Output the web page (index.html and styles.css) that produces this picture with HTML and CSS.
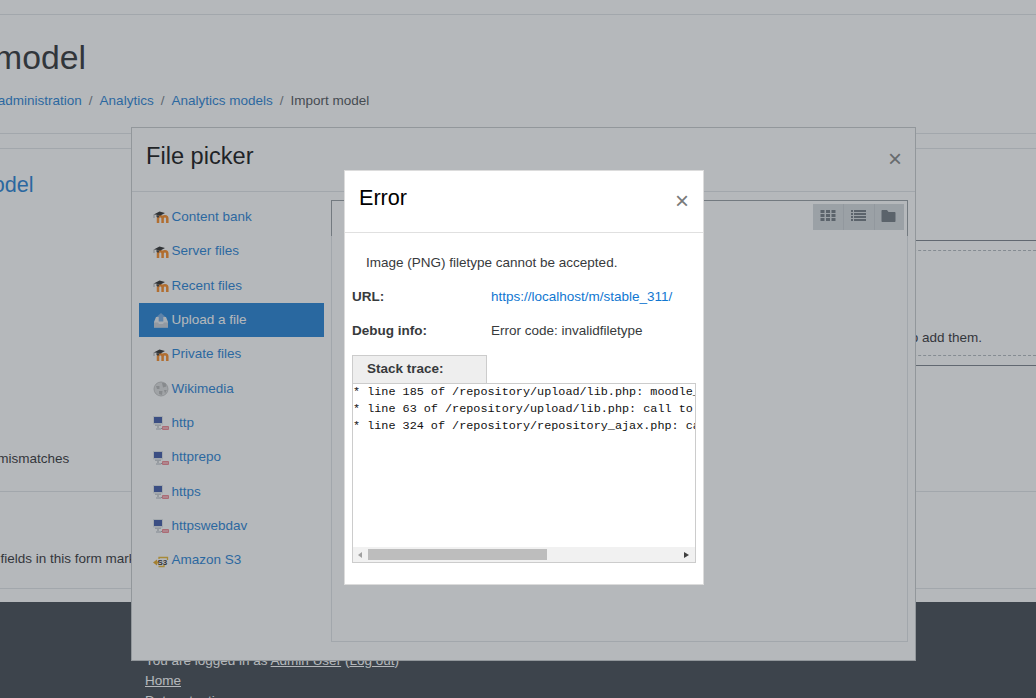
FILE: index.html
```html
<!DOCTYPE html>
<html lang="en">
<head>
<meta charset="utf-8">
<title>Import model</title>
<link rel="stylesheet" href="styles.css">
</head>
<body>
<svg class="defs" width="0" height="0" aria-hidden="true">
  <symbol id="i-moodle" viewBox="0 0 16 16">
    <path d="M5 14V9.500a2.200 2.200 0 0 1 4.600 0V14M9.600 9.500a2.300 2.300 0 0 1 4.700 0V14" fill="none" stroke="#f98012" stroke-width="2.500"/>
    <path d="M.8 5.500 6.500 2.500 12 4 7 6.800 3.800 5.800z" fill="#1c1c1c"/>
    <path d="M3.500 6v2c1 .6 1.800.6 2.500.3V6.500z" fill="#2c2c2c"/>
    <path d="M1 5.500v3.500" stroke="#888" stroke-width=".7" fill="none"/>
  </symbol>
  <symbol id="i-upload" viewBox="0 0 16 16">
    <path d="M1 10 3 5h10l2 5v5.500H1z" fill="#e6eaef"/>
    <path d="M1 10.500h4l1 1.500h4l1-1.500h4v5H1z" fill="#c3cad4"/>
    <path d="M8 1 12.500 5H10.300v4.500H5.700V5H3.500z" fill="#6aa4e0"/>
  </symbol>
  <symbol id="i-wiki" viewBox="0 0 16 16">
    <circle cx="8" cy="8" r="7.200" fill="#dcdcdc"/>
    <path d="M3 5h3.500v3H4zM9 2h3.500l1 3.500L10 6.500zM6 10h3.500L9 14l-3-1zM11 9h2.800L12 12.500z" fill="#b0b0b0"/>
    <circle cx="8" cy="8" r="7" fill="none" stroke="#b8b8b8" stroke-width=".8"/>
  </symbol>
  <symbol id="i-http" viewBox="0 0 16 16">
    <rect x="0" y="1" width="10" height="8.500" fill="#dfe3e8"/>
    <rect x="1" y="2" width="8" height="6" fill="#2f4aa0"/>
    <rect x="2" y="9.500" width="6" height="1.500" fill="#c3c8ce"/>
    <path d="M5 11v2.500h4" stroke="#9aa0a6" stroke-width="1" fill="none"/>
    <rect x="3" y="13" width="5" height="2" fill="#d3d7dc"/>
    <rect x="9" y="11" width="7" height="4" rx="1" fill="#ee7b87"/>
    <rect x="10" y="12.500" width="5" height="1" fill="#fbd6da"/>
  </symbol>
  <symbol id="i-s3" viewBox="0 0 16 16">
    <path d="M0 9.500 4 6.500v6z" fill="#e09d10"/>
    <path d="M3 8.500h3v2H3z" fill="#e6a817"/>
    <path d="M6 6V4.500h8.500V7M5.500 13.500H11V12" fill="none" stroke="#e8b020" stroke-width="1.300"/>
    <text class="s3-text" x="4.500" y="12">S3</text>
  </symbol>
</svg>

<div class="page">
  <div class="topbar"></div>
  <header class="page-head">
    <h1 class="page-title">Import model</h1>
    <nav class="crumbs">
      <a href="#">Home</a><span class="sep">/</span><a href="#">Site administration</a><span class="sep">/</span><a href="#">Analytics</a><span class="sep">/</span><a href="#">Analytics models</a><span class="sep">/</span><span>Import model</span>
    </nav>
  </header>
  <main class="content">
    <h2 class="section-title"><a href="#">Import model</a></h2>
    <div class="form-row">
      <div class="filemanager">
        <div class="dnd">You can drag and drop files here to add them.</div>
      </div>
    </div>
    <div class="check-row">Ignore version mismatches</div>
    <div class="required-row">There are required fields in this form marked with an icon.</div>
  </main>
  <footer class="footer">
    <p class="footer-line">You are logged in as <a href="#">Admin User</a> (<a href="#">Log out</a>)</p>
    <p class="footer-line"><a href="#">Home</a></p>
    <p class="footer-line"><a href="#">Data retention summary</a></p>
  </footer>
</div>

<section class="picker">
  <div class="picker-head">
    <h3 class="picker-title">File picker</h3>
    <span class="close picker-close">×</span>
  </div>
  <div class="picker-body">
    <ul class="repo-list">
      <li class="repo"><svg class="repo-icon"><use href="#i-moodle"/></svg><a href="#">Content bank</a></li>
      <li class="repo"><svg class="repo-icon"><use href="#i-moodle"/></svg><a href="#">Server files</a></li>
      <li class="repo"><svg class="repo-icon"><use href="#i-moodle"/></svg><a href="#">Recent files</a></li>
      <li class="repo active"><svg class="repo-icon"><use href="#i-upload"/></svg><a href="#">Upload a file</a></li>
      <li class="repo"><svg class="repo-icon"><use href="#i-moodle"/></svg><a href="#">Private files</a></li>
      <li class="repo"><svg class="repo-icon"><use href="#i-wiki"/></svg><a href="#">Wikimedia</a></li>
      <li class="repo"><svg class="repo-icon"><use href="#i-http"/></svg><a href="#">http</a></li>
      <li class="repo"><svg class="repo-icon"><use href="#i-http"/></svg><a href="#">httprepo</a></li>
      <li class="repo"><svg class="repo-icon"><use href="#i-http"/></svg><a href="#">https</a></li>
      <li class="repo"><svg class="repo-icon"><use href="#i-http"/></svg><a href="#">httpswebdav</a></li>
      <li class="repo"><svg class="repo-icon"><use href="#i-s3"/></svg><a href="#">Amazon S3</a></li>
    </ul>
    <div class="panel">
      <div class="panel-bar">
        <div class="view-btns">
          <span class="view-btn">
            <svg width="16" height="12" viewBox="0 0 16 12"><path d="M.5 0h4v3h-4zM6 0h4v3H6zM11.500 0h4v3h-4zM.5 4h4v3h-4zM6 4h4v3H6zM11.500 4h4v3h-4zM.5 8h4v3h-4zM6 8h4v3H6zM11.500 8h4v3h-4z" fill="#666e76"/></svg>
          </span>
          <span class="view-btn">
            <svg width="16" height="12" viewBox="0 0 16 12"><path d="M0 0h2v2H0zM3 0h12v2H3zM0 3h2v2H0zM3 3h12v2H3zM0 6h2v2H0zM3 6h12v2H3zM0 9h2v2H0zM3 9h12v2H3z" fill="#666e76"/></svg>
          </span>
          <span class="view-btn">
            <svg width="16" height="12" viewBox="0 0 16 12"><path d="M1.500 0H6l1.500 2H13.500c.6 0 1 .4 1 1v8c0 .6-.4 1-1 1h-12c-.6 0-1-.4-1-1V1c0-.6.4-1 1-1z" fill="#666e76"/></svg>
          </span>
        </div>
      </div>
    </div>
  </div>
</section>

<div class="backdrop"></div>

<section class="error">
  <div class="error-head">
    <h3 class="error-title">Error</h3>
    <span class="close error-close">×</span>
  </div>
  <div class="error-body">
    <p class="error-msg">Image (PNG) filetype cannot be accepted.</p>
    <div class="error-field"><strong class="field-label">URL:</strong><a href="#">https://localhost/m/stable_311/</a></div>
    <div class="error-field"><strong class="field-label">Debug info:</strong><span>Error code: invalidfiletype</span></div>
    <div class="trace-tab">Stack trace:</div>
    <div class="trace-box">
      <pre class="trace-text">* line 185 of /repository/upload/lib.php: moodle_exception thrown
* line 63 of /repository/upload/lib.php: call to repository_upload-&gt;process_upload()
* line 324 of /repository/repository_ajax.php: call to repository_upload-&gt;upload()</pre>
      <div class="hscroll">
        <span class="arrow arrow-left"></span>
        <div class="track"><div class="thumb"></div></div>
        <span class="arrow arrow-right"></span>
      </div>
    </div>
  </div>
</section>
</body>
</html>
```

FILE: styles.css
```css
* { box-sizing: border-box; }
html, body { margin: 0; padding: 0; height: 100%; overflow: hidden; }
body {
  font-family: "Liberation Sans", Arial, sans-serif;
  font-size: 13.5px;
  line-height: 20.25px;
  color: #1d2125;
  background: #fff;
  width: 1036px;
  height: 698px;
  position: relative;
}
a { color: #1177d1; text-decoration: none; }
.defs { position: absolute; }
.s3-text { font-family: "Liberation Sans", Arial, sans-serif; font-size: 8px; font-weight: 700; fill: #1c1c1c; }

.page { margin-left: -116px; width: 1152px; height: 698px; display: flex; flex-direction: column; overflow: hidden; }
.topbar { height: 15px; border-bottom: 1px solid #dee2e6; flex: none; }
.page-head { padding: 22px 0 0 0; height: 119px; border-bottom: 1px solid #dee2e6; flex: none; }
.page-title { margin: 0; padding-left: 5px; font-size: 33.75px; font-weight: 400; line-height: 40.5px; color: #1d2125; }
.crumbs { margin-top: 13px; white-space: nowrap; color: #3f454b; padding-left: 33px; }
.crumbs .sep { color: #6a737b; padding: 0 7px; }

.content { flex: 1; padding-top: 14px; display: flex; flex-direction: column; }
.section-title { margin: 0; padding: 23px 0 0 23.5px; border-top: 1px solid #dee2e6; font-size: 21.6px; line-height: 26px; font-weight: 400; }
.form-row { margin: 42px 0 0 400px; }
.filemanager { border-top: 1px solid #6f7780; border-bottom: 1px solid #6f7780; padding: 9px 0; }
.dnd { border-top: 1px dashed #aeb4ba; border-bottom: 1px dashed #aeb4ba; padding: 77px 54px 7px 0; text-align: right; height: 106px; white-space: nowrap; }
.check-row { margin-top: 83px; padding: 0 0 22px 24px; border-bottom: 1px solid #dee2e6; }
.required-row { margin-top: 57px; padding: 0 0 18px 1px; border-bottom: 1px solid #dee2e6; white-space: nowrap; }

.footer { margin-top: 13px; flex: 1; background: #323a42; padding: 49px 0 0 261px; color: #fff; }
.footer-line { margin: 0; }
.footer a { color: #fff; text-decoration: underline; }

.picker {
  position: absolute; left: 131px; top: 127px; width: 785px; height: 534px;
  background: #fff; border: 1px solid #c4c6c8;
  display: flex; flex-direction: column;
}
.picker-head { height: 64px; flex: none; border-bottom: 1px solid #dee2e6; padding: 14px 14px 0; display: flex; justify-content: space-between; }
.picker-title { margin: 0; font-size: 23.625px; line-height: 28px; font-weight: 400; color: #000; }
.close { font-size: 24px; line-height: 29px; color: #7a7a7a; }
.picker-close { padding-top: 2px; margin-right: -1px; }
.picker-body { flex: 1; display: flex; padding: 8px 7px 18px; }
.repo-list { list-style: none; margin: 0; padding: 0; width: 185px; flex: none; }
.repo { height: 34.35px; padding: 7px 0 7px 14px; display: flex; align-items: center; }
.repo-icon { width: 16px; height: 16px; margin-right: 2.5px; flex: none; }
.repo.active { background: #1177d1; }
.repo.active a { color: #fff; }
.panel { margin-left: 7px; flex: 1; border: 1px solid #dee2e6; }
.panel-bar { height: 36px; margin: -1px -1px 0; border: 1px solid #8f959b; border-bottom: 0; display: flex; justify-content: flex-end; padding: 3px 3px 0 0; }
.view-btns { display: flex; height: 26px; background: #d3d8dc; }
.view-btn { width: 30.333px; display: flex; align-items: center; justify-content: center; padding-bottom: 2px; border-left: 1px solid #c4c9ce; }
.view-btn:first-child { border-left: 0; }

.backdrop { position: absolute; inset: 0; background: rgba(76, 84, 92, .414); }

.error {
  position: absolute; left: 344px; top: 170px; width: 360px; height: 415px;
  background: #fff; border: 1px solid #dcdcdc; color: #373a3c;
  display: flex; flex-direction: column;
}
.error-head { height: 62px; flex: none; border-bottom: 1px solid #e0e0e0; padding: 14px 14px 0; display: flex; justify-content: space-between; }
.error-title { margin: 0; font-size: 21.6px; line-height: 26px; font-weight: 400; color: #000; }
.error-close { padding-top: 1px; }
.error-body { flex: 1; padding: 20px 7px 0; line-height: 20px; }
.error-msg { margin: 0 0 14px 14px; }
.error-field { display: flex; margin-bottom: 14px; }
.field-label { width: 139px; flex: none; font-weight: 700; }
.trace-tab { width: 135px; height: 28px; border: 1px solid #ccc; border-bottom: 0; background: #eee; font-weight: 700; padding: 3px 0 0 14px; }
.trace-box { width: 344px; height: 180px; border: 1px solid #ccc; display: flex; flex-direction: column; }
.trace-text { flex: 1; margin: 0; padding: 0; overflow: hidden; font-family: "Liberation Mono", monospace; font-size: 11.8125px; line-height: 17px; color: #111; }
.hscroll { height: 15px; background: #f1f1f1; display: flex; align-items: center; flex: none; }
.track { flex: 1; height: 11px; margin: 0 2px; }
.thumb { width: 179px; height: 11px; background: #bdbdbd; }
.arrow { width: 13px; flex: none; height: 0; border-top: 3.500px solid transparent; border-bottom: 3.500px solid transparent; }
.arrow-left { margin-left: 5px; width: 0; border-right: 4px solid #a0a0a0; margin-right: 4px; }
.arrow-right { margin-right: 6px; width: 0; border-left: 5px solid #404040; }
```
